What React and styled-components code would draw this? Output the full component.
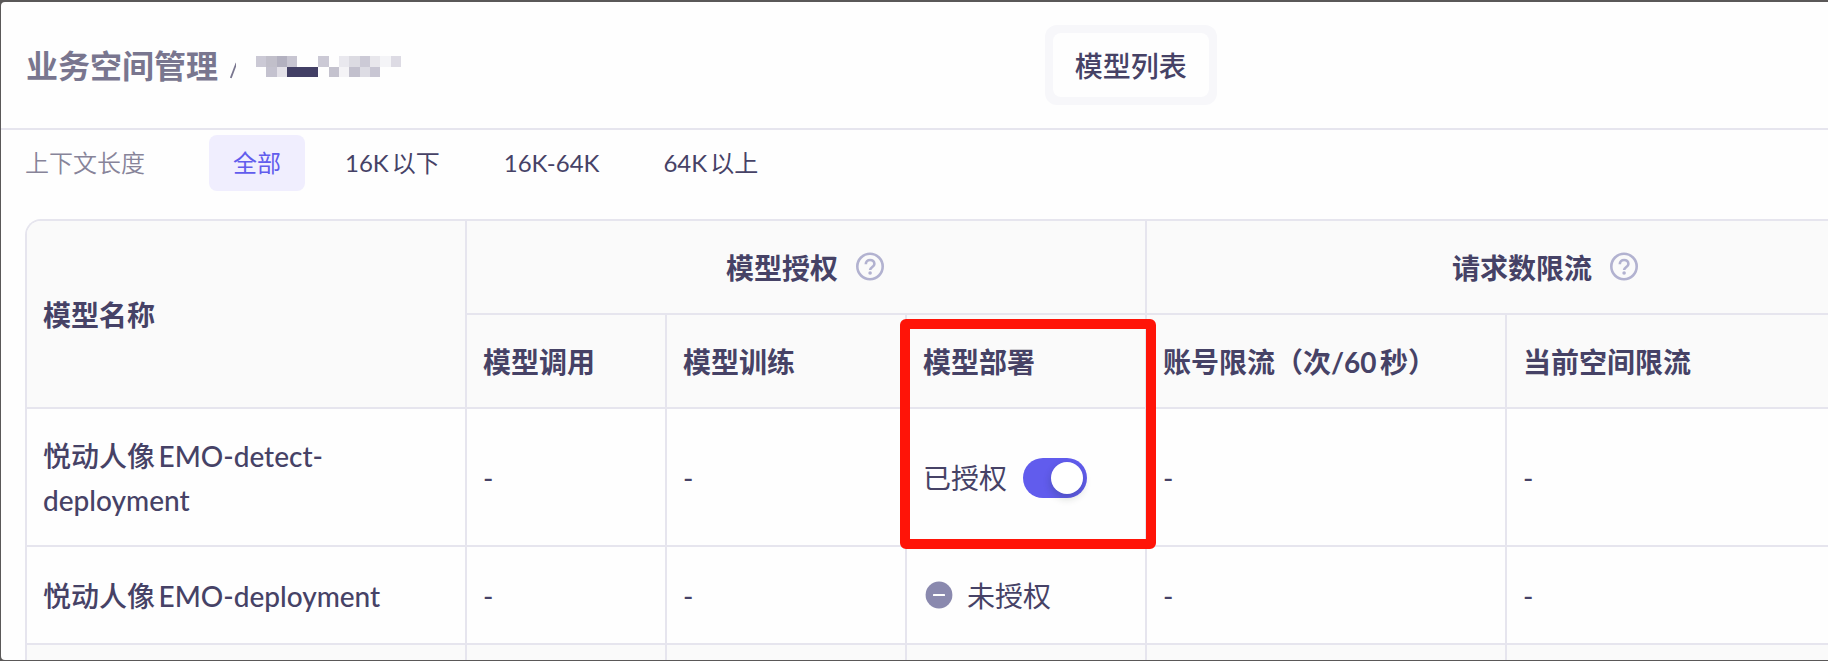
import React from "react";
import styled, { createGlobalStyle, css } from "styled-components";

const color = {
  ink: "#464266",
  title: "#79768f",
  label: "#878499",
  accent: "#615ced",
  accentSoft: "#f0eefe",
  line: "#e6e5ee",
  head: "#fafafa",
  surface: "#fefefe",
  icon: "#8a89ae",
  help: "#b2b2d0",
  mark: "#ff1408",
};

const GlobalStyle = createGlobalStyle`
  *, *::before, *::after { box-sizing: border-box; }
  body {
    margin: 0;
    background: #5a5858;
    color: ${color.ink};
    font-family: Lato, "Noto Sans CJK SC", sans-serif;
    font-size: 28px;
    line-height: 44px;
    text-autospace: normal;
  }
  button, input { font: inherit; color: inherit; }
`;

const Backdrop = styled.div`
  display: flex;
  min-height: 100vh;
  padding: 2px 0 1px 1px;
`;

const Panel = styled.main`
  flex: 1;
  min-width: 0;
  display: flex;
  flex-direction: column;
  background: ${color.surface};
  border-radius: 4px 0 0 4px;
  overflow: hidden;
`;

const Header = styled.header`
  display: grid;
  grid-template-columns: 5fr auto 3fr;
  align-items: center;
  padding: 23px 0 23px 25px;
  border-bottom: 2px solid ${color.line};
`;

const Breadcrumb = styled.nav`
  display: flex;
  align-items: center;
  padding-top: 2px;
  color: ${color.title};
`;

const Crumb = styled.a`
  font-size: 32px;
  font-weight: 700;
  color: inherit;
  text-decoration: none;
`;

const Slash = styled.svg`
  margin-left: 12px;
`;

const Mosaic = styled.svg`
  margin-left: 20px;
`;

const Segmented = styled.div`
  padding: 8px;
  border-radius: 12px;
  background: #f7f7fa;
`;

const Segment = styled.button`
  display: block;
  height: 64px;
  padding: 2px 22px 0;
  border: 0;
  border-radius: 8px;
  background: ${color.surface};
  font-weight: 500;
`;

const Filters = styled.section`
  display: flex;
  align-items: center;
  gap: 64px;
  padding: 5px 24px 28px;
  font-size: 24px;
`;

const FilterLabel = styled.span`
  color: ${color.label};
  font-weight: 350;
`;

const FilterList = styled.div`
  display: flex;
  gap: 16px;
`;

const FilterButton = styled.button`
  height: 56px;
  padding: 0 24px;
  border: 0;
  border-radius: 8px;
  background: transparent;
  font-weight: 400;
  ${(p) =>
    p.$active &&
    css`
      background: ${color.accentSoft};
      color: ${color.accent};
    `}
`;

const TableFrame = styled.section`
  flex: 1;
  margin-left: 24px;
  border: solid ${color.line};
  border-width: 2px 0 0 2px;
  border-top-left-radius: 16px;
  overflow: hidden;
`;

const Table = styled.table`
  width: 100%;
  min-width: 1920px;
  table-layout: fixed;
  border-collapse: separate;
  border-spacing: 0;
`;

const cell = css`
  padding: 25px 16px 23px;
  border: solid ${color.line};
  border-width: 0 2px 2px 0;
  text-align: left;
  vertical-align: middle;
`;

const HeadCell = styled.th`
  ${cell}
  position: relative;
  background: ${color.head};
  font-weight: 700;
`;

const Cell = styled.td`
  ${cell}
  font-weight: 400;
`;

const NameCell = styled.th`
  ${cell}
  font-weight: 500;
`;

const DataRow = styled.tr`
  height: 98px;
`;

const NextCell = styled.td`
  height: 15px;
  padding: 0;
  border-right: 2px solid ${color.line};
  background: ${color.head};
`;

const Group = styled.span`
  display: flex;
  align-items: center;
  justify-content: center;
  gap: 16px;
`;

const Status = styled.label`
  display: flex;
  align-items: center;
  gap: ${(p) => p.$gap}px;
`;

const Switch = styled.input`
  appearance: none;
  width: 64px;
  height: 40px;
  margin: 0;
  padding: 4px;
  display: flex;
  justify-content: flex-start;
  border-radius: 20px;
  background: #c5c4d6;
  &:checked {
    justify-content: flex-end;
    background: ${color.accent};
  }
  &::before {
    content: "";
    width: 32px;
    height: 32px;
    border-radius: 50%;
    background: #fff;
    box-shadow: 0 4px 8px rgba(0, 35, 11, 0.2);
  }
`;

const Highlight = styled.span`
  position: absolute;
  z-index: 1;
  top: 4px;
  left: -7px;
  right: -11px;
  height: 230px;
  border: 10px solid ${color.mark};
  border-radius: 6px;
  pointer-events: none;
`;

const HelpIcon = () => (
  <svg width="32" height="32" viewBox="0 0 32 32" fill="none" stroke={color.help} strokeWidth="2.6" aria-hidden="true">
    <circle cx="16" cy="14.5" r="12.7" />
    <path d="M11.8 12.2c0-2.6 1.8-4.2 4.3-4.2s4.3 1.6 4.3 3.9c0 3-4.3 3.1-4.3 6.2" />
    <circle cx="16.1" cy="21" r="1.8" fill={color.help} stroke="none" />
  </svg>
);

const MinusIcon = () => (
  <svg width="32" height="32" viewBox="0 0 32 32" aria-hidden="true">
    <circle cx="16" cy="15" r="13.4" fill={color.icon} />
    <rect x="10" y="14" width="12" height="2" rx="0.5" fill="#fff" />
  </svg>
);

const mosaicRows = [
  ["#cbc9d5", "#c1bfca", "#b3b1c0", "#c7c5d1", null, null, "#cbc9d5", null, "#e9e8ee", "#dcdbe2", "#cccad6", "#e8e7ec", "#f4f4f7", "#dddbe4"],
  [null, "#c4c2cf", "#e3e1e8", "#423f65", "#423f65", "#423f65", null, "#c4c2ce", "#f4f3f6", "#c2c0cd", "#dddce4", "#c8c6d3"],
];

const filters = ["全部", "16K以下", "16K-64K", "64K以上"];
const columns = [440, 200, 240, 240, 360, 440];
const rows = [
  { name: "悦动人像EMO-detect-deployment", granted: true },
  { name: "悦动人像EMO-deployment", granted: false },
];

export default function App() {
  const [active, setActive] = React.useState("全部");
  return (
    <>
      <GlobalStyle />
      <Backdrop>
        <Panel>
          <Header>
            <Breadcrumb>
              <Crumb href="#">业务空间管理</Crumb>
              <Slash width="6" height="28" viewBox="0 0 6 28" aria-hidden="true">
                <path d="M.8 26 6.5 11" stroke={color.title} strokeWidth="1.8" />
              </Slash>
              <Mosaic width="146" height="21" viewBox="0 0 146 21" shapeRendering="crispEdges" aria-hidden="true">
                {mosaicRows.map((cells, y) =>
                  cells.map(
                    (fill, x) =>
                      fill && <rect key={`${y}-${x}`} x={x * 10.36} y={y * 10.5} width="10.4" height="10.5" fill={fill} />
                  )
                )}
              </Mosaic>
            </Breadcrumb>
            <Segmented>
              <Segment type="button">模型列表</Segment>
            </Segmented>
          </Header>

          <Filters>
            <FilterLabel id="context-length">上下文长度</FilterLabel>
            <FilterList role="group" aria-labelledby="context-length">
              {filters.map((f) => (
                <FilterButton
                  key={f}
                  type="button"
                  $active={f === active}
                  aria-pressed={f === active}
                  onClick={() => setActive(f)}
                >
                  {f}
                </FilterButton>
              ))}
            </FilterList>
          </Filters>

          <TableFrame>
            <Table>
              <colgroup>
                {columns.map((w, i) => (
                  <col key={i} width={w} />
                ))}
              </colgroup>
              <thead>
                <tr>
                  <HeadCell rowSpan={2}>模型名称</HeadCell>
                  <HeadCell colSpan={3}>
                    <Group>
                      模型授权
                      <HelpIcon />
                    </Group>
                  </HeadCell>
                  <HeadCell colSpan={2}>
                    <Group>
                      请求数限流
                      <HelpIcon />
                    </Group>
                  </HeadCell>
                </tr>
                <tr>
                  <HeadCell>模型调用</HeadCell>
                  <HeadCell>模型训练</HeadCell>
                  <HeadCell>
                    模型部署
                    <Highlight />
                  </HeadCell>
                  <HeadCell>账号限流（次/60秒）</HeadCell>
                  <HeadCell>当前空间限流</HeadCell>
                </tr>
              </thead>
              <tbody>
                {rows.map((r) => (
                  <DataRow key={r.name}>
                    <NameCell scope="row">{r.name}</NameCell>
                    <Cell>-</Cell>
                    <Cell>-</Cell>
                    <Cell>
                      {r.granted ? (
                        <Status $gap={16}>
                          已授权
                          <Switch type="checkbox" role="switch" defaultChecked />
                        </Status>
                      ) : (
                        <Status as="span" $gap={12}>
                          <MinusIcon />
                          未授权
                        </Status>
                      )}
                    </Cell>
                    <Cell>-</Cell>
                    <Cell>-</Cell>
                  </DataRow>
                ))}
                <tr>
                  {columns.map((_, i) => (
                    <NextCell key={i} />
                  ))}
                </tr>
              </tbody>
            </Table>
          </TableFrame>
        </Panel>
      </Backdrop>
    </>
  );
}
